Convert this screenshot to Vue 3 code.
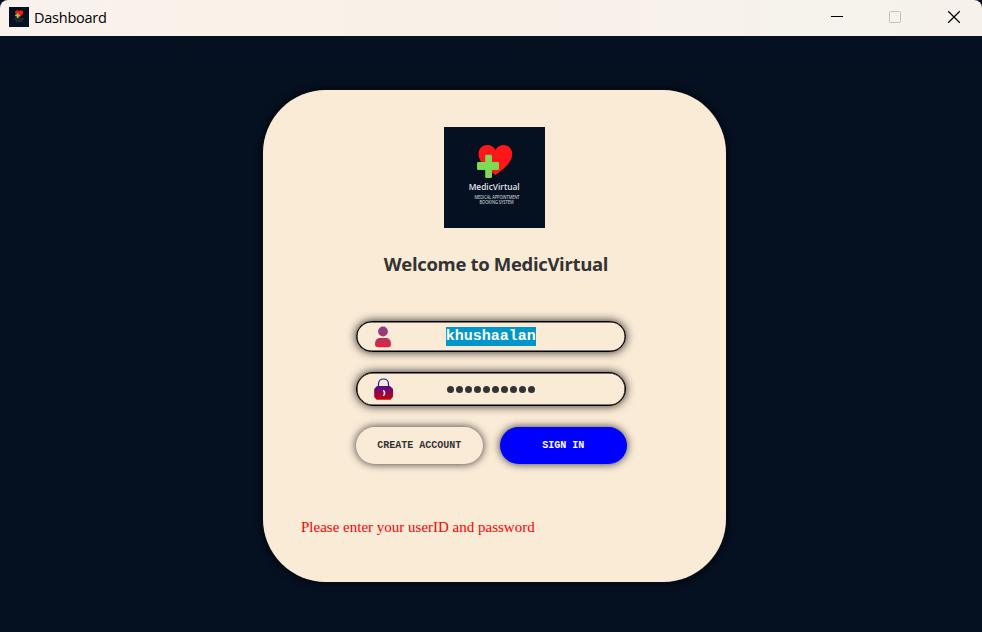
<script setup>
import { ref } from 'vue'

const userId = ref('khushaalan')
const passwordLength = 10
const message = ref('Please enter your userID and password')
</script>

<template>
  <div class="window">
    <header class="titlebar">
      <svg class="app-icon" viewBox="0 0 101 101">
        <rect width="101" height="101" fill="#051021" />
        <path d="M51 53C35 41 31 35 31 27c0-12 15-15 20-5 5-10 21-7 21 5 0 10-9 19-21 26z" fill="#ff1616" />
        <path d="M39 33h9v6h7v8h-7v8h-9v-8h-8v-8h8z" fill="#7ed957" />
        <path d="M26 60h50M34 71h34" stroke="#5c6671" stroke-width="3" />
      </svg>
      <span class="title">Dashboard</span>
      <div class="controls">
        <svg viewBox="0 0 14 14"><path d="M1 6.5h12" stroke="#000" /></svg>
        <svg viewBox="0 0 14 14"><rect x="1.5" y="1.5" width="11" height="11" rx="1" fill="none" stroke="#c4c0bb" /></svg>
        <svg viewBox="0 0 14 14"><path d="M1.2 1.2l11.6 11.6M12.8 1.2L1.2 12.8" stroke="#000" stroke-width="1.25" /></svg>
      </div>
    </header>

    <main class="content">
      <section class="card">
        <svg class="logo" viewBox="0 0 101 101">
          <rect width="101" height="101" fill="#051021" />
          <path d="M51.500 48C44 42 34.500 36 34.500 27c0-10 13-12 17-4 4-8 16.700-6 16.700 4 0 8-8 15-16.700 21z" fill="#ff1616" />
          <path d="M42.500 27.700h4.200q1.300 0 1.300 1.300v6h5.700q1.300 0 1.300 1.300v5.400q0 1.300-1.300 1.300H48v6.700q0 1.300-1.300 1.300h-4.200q-1.300 0-1.300-1.300V43h-6.900q-1.300 0-1.300-1.300v-5.400q0-1.300 1.300-1.300h6.900v-6q0-1.300 1.300-1.300z" fill="#7ed957" />
          <text class="logo-name" x="50.200" y="63" text-anchor="middle" textLength="51" lengthAdjust="spacingAndGlyphs">MedicVirtual</text>
          <text class="logo-sub" x="53" y="71.500" text-anchor="middle" textLength="45" lengthAdjust="spacingAndGlyphs">MEDICAL APPOINTMENT</text>
          <text class="logo-sub" x="52.500" y="77" text-anchor="middle" textLength="34" lengthAdjust="spacingAndGlyphs">BOOKING SYSTEM</text>
        </svg>
        <h1>Welcome to MedicVirtual</h1>

        <form class="form" @submit.prevent>
          <div class="field user">
            <svg class="field-icon" viewBox="0 0 20 22">
              <defs>
                <linearGradient id="userFill" gradientUnits="userSpaceOnUse" x1="0" y1="0" x2="0" y2="22">
                  <stop offset="0" stop-color="#7a4299" />
                  <stop offset="1" stop-color="#e32636" />
                </linearGradient>
              </defs>
              <circle cx="9" cy="5.500" r="4.900" fill="url(#userFill)" />
              <path d="M5 12h8q4 1.200 4 6 0 3.200-3 3.200H4q-3 0-3-3.200 0-4.800 4-6z" fill="url(#userFill)" />
            </svg>
            <span class="value"><mark>{{ userId }}</mark></span>
          </div>
          <div class="field password">
            <svg class="field-icon" viewBox="0 0 20 22">
              <defs>
                <linearGradient id="lockFill" gradientUnits="userSpaceOnUse" x1="0" y1="0" x2="0" y2="22">
                  <stop offset="0" stop-color="#0c10dc" />
                  <stop offset="1" stop-color="#cf0000" />
                </linearGradient>
              </defs>
              <path d="M4.500 9V6Q4.700 1 9.500 1T14.500 6v3" fill="none" stroke="#1c18bb" stroke-width="1.200" />
              <path d="M3 8h13l3 3v7.500L16.500 21.700H2.700L.2 19v-8z" fill="url(#lockFill)" />
              <path d="M9 12h1q1.400 1 1.400 3t-1.400 3H9v-1.200h.6v-3.200H9z" fill="#faebd7" />
            </svg>
            <span class="value dots"><i v-for="n in passwordLength" :key="n"></i></span>
          </div>
          <div class="actions">
            <button type="button" class="create">CREATE ACCOUNT</button>
            <button type="submit" class="signin">SIGN IN</button>
          </div>
        </form>

        <p class="message">{{ message }}</p>
      </section>
    </main>
  </div>
</template>

<style>
body {
  margin: 0;
  background: #051021;
}
</style>

<style scoped>
* {
  box-sizing: border-box;
}
.window {
  width: 982px;
  height: 632px;
  display: flex;
  flex-direction: column;
  overflow: hidden;
  background: #051021;
}
.titlebar {
  height: 36px;
  flex: none;
  display: flex;
  align-items: center;
  padding: 0 21px 2px 9px;
  border-radius: 8px 8px 0 0;
  background: linear-gradient(90deg, #f9f2ed 0, #faf1e9 210px, #f9f1e8 480px, #f6f2ec 800px, #f6f1eb 100%);
}
.app-icon {
  width: 20px;
  height: 20px;
}
.title {
  margin-left: 5px;
  padding-top: 1px;
  font: 14.500px/20px "Open Sans", sans-serif;
  letter-spacing: -0.25px;
  color: #000;
}
.controls {
  margin-left: auto;
  display: flex;
}
.controls svg {
  width: 14px;
  height: 14px;
}
.controls svg:nth-child(2) {
  margin: 0 45px 0 44px;
}
.content {
  flex: 1;
  padding: 54px 0 0 262.500px;
}
.card {
  width: 463.500px;
  height: 492px;
  border-radius: 63px;
  background: #faebd7;
  box-shadow: 0 0 9px #000, 0 0 1px #8b8379;
  display: flex;
  flex-direction: column;
  align-items: center;
  padding-top: 37px;
}
.logo {
  width: 101px;
  height: 101px;
  flex: none;
}
.logo-name {
  font: 600 9px "Open Sans", sans-serif;
  fill: #e1e4e7;
}
.logo-sub {
  font: 4.600px "Open Sans", sans-serif;
  fill: #e1e4e7;
}
h1 {
  margin: 22px 0 0 3.500px;
  font: 700 18.500px/28px "Open Sans", sans-serif;
  letter-spacing: -0.33px;
  color: #333;
  white-space: nowrap;
}
.form {
  width: 271px;
  margin-top: 43px;
  margin-right: 6px;
}
.field {
  width: 270px;
  display: flex;
  align-items: center;
  border: 1px solid #000;
  border-radius: 17px;
  background: #faebd7;
  box-shadow: 0 0 10px rgba(0, 0, 0, 0.85), inset 0 0 0 0.5px #000;
  padding-left: 17px;
}
.user {
  height: 31px;
}
.password {
  height: 34px;
  margin-top: 20px;
}
.field-icon {
  width: 20px;
  height: 22px;
}
.value {
  margin-left: 52px;
  font: 700 15px/19px "Liberation Mono", monospace;
}
mark {
  display: block;
  background: #0096c9;
  color: #fff;
}
.dots {
  display: flex;
  gap: 2px;
  padding: 1px 0 0 1px;
}
.dots i {
  width: 7px;
  height: 7px;
  border-radius: 50%;
  background: #333;
}
.actions {
  display: flex;
  justify-content: space-between;
  margin-top: 21px;
}
button {
  width: 127px;
  height: 37px;
  padding: 0;
  border: 0;
  border-radius: 18.500px;
  font: 700 10px/12px "Liberation Mono", monospace;
  box-shadow: 0 0 9px rgba(0, 0, 0, 0.8);
}
.create {
  background: #faebd7;
  color: #333;
}
.signin {
  background: #00f;
  color: #fff;
}
.message {
  align-self: flex-start;
  margin: 53px 0 0 38.500px;
  font: 15px/20px "Liberation Serif", serif;
  color: #f00;
}
</style>
